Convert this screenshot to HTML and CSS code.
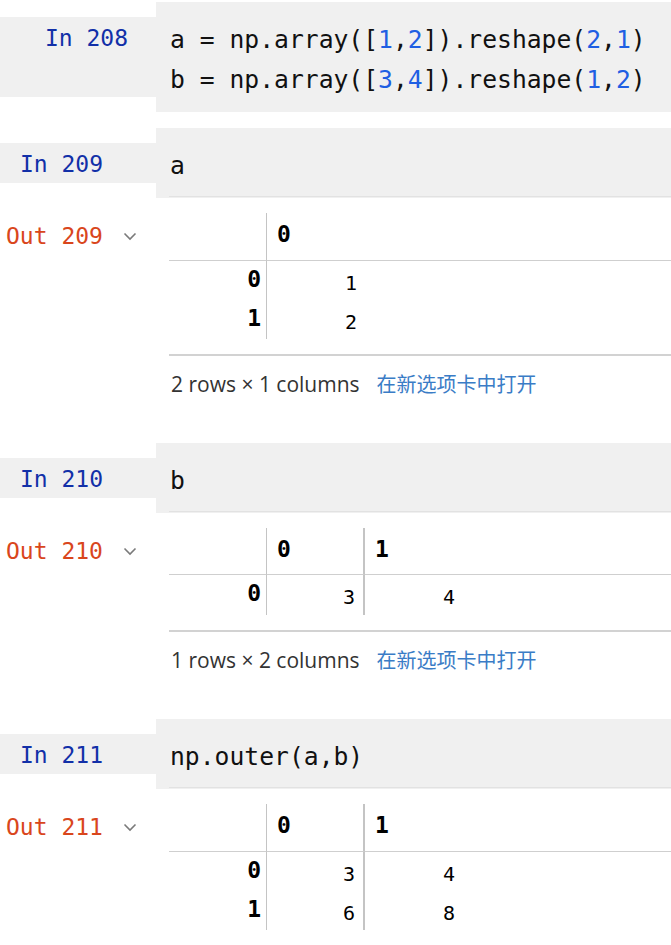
FILE: index.html
```html
<!DOCTYPE html>
<html>
<head>
<meta charset="utf-8">
<link rel="stylesheet" href="styles.css">
</head>
<body>
<div class="nb">
  <div class="cell cell-first">
    <div class="prompt in wide">In 208</div>
    <div class="code"><div class="editor noline">
      <div class="line">a = np.array([<span class="n">1</span>,<span class="n">2</span>]).reshape(<span class="n">2</span>,<span class="n">1</span>)</div>
      <div class="line">b = np.array([<span class="n">3</span>,<span class="n">4</span>]).reshape(<span class="n">1</span>,<span class="n">2</span>)</div>
    </div></div>
  </div>

  <div class="cell">
    <div class="prompt in">In 209</div>
    <div class="code"><div class="editor"><div class="line">a</div></div></div>
  </div>
  <div class="output">
    <div class="oprompt"><span class="out">Out 209</span><svg class="chev" width="14" height="9" viewBox="0 0 14 9"><path d="M1.5 1.5 L7 7 L12.5 1.5" fill="none" stroke="#7a7a7a" stroke-width="1.6"/></svg></div>
    <div class="oarea">
      <div class="tbl cols1">
        <div class="th idx"></div><div class="th c1">0</div><div class="th fill"></div>
        <div class="ix">0</div><div class="td c1">1</div><div class="td fill"></div>
        <div class="ix">1</div><div class="td c1">2</div><div class="td fill"></div>
      </div>
      <div class="foot"><span>2 rows × 1 columns</span><a class="lnk">在新选项卡中打开</a></div>
    </div>
  </div>

  <div class="cell after-out">
    <div class="prompt in">In 210</div>
    <div class="code"><div class="editor"><div class="line">b</div></div></div>
  </div>
  <div class="output">
    <div class="oprompt"><span class="out">Out 210</span><svg class="chev" width="14" height="9" viewBox="0 0 14 9"><path d="M1.5 1.5 L7 7 L12.5 1.5" fill="none" stroke="#7a7a7a" stroke-width="1.6"/></svg></div>
    <div class="oarea">
      <div class="tbl cols2 one">
        <div class="th idx"></div><div class="th c1">0</div><div class="th c2">1</div><div class="th fill"></div>
        <div class="ix">0</div><div class="td c1">3</div><div class="td c2">4</div><div class="td fill"></div>
      </div>
      <div class="foot"><span>1 rows × 2 columns</span><a class="lnk">在新选项卡中打开</a></div>
    </div>
  </div>

  <div class="cell after-out">
    <div class="prompt in">In 211</div>
    <div class="code"><div class="editor"><div class="line">np.outer(a,b)</div></div></div>
  </div>
  <div class="output">
    <div class="oprompt"><span class="out">Out 211</span><svg class="chev" width="14" height="9" viewBox="0 0 14 9"><path d="M1.5 1.5 L7 7 L12.5 1.5" fill="none" stroke="#7a7a7a" stroke-width="1.6"/></svg></div>
    <div class="oarea">
      <div class="tbl cols2">
        <div class="th idx"></div><div class="th c1">0</div><div class="th c2">1</div><div class="th fill"></div>
        <div class="ix">0</div><div class="td c1">3</div><div class="td c2">4</div><div class="td fill"></div>
        <div class="ix">1</div><div class="td c1">6</div><div class="td c2">8</div><div class="td fill"></div>
      </div>
    </div>
  </div>
</div>
</body>
</html>
```
FILE: styles.css
```css
html, body {
  margin: 0;
  padding: 0;
  background: #ffffff;
}
.nb {
  width: 671px;
  padding-top: 2px;
  font-family: "DejaVu Sans Mono", "Liberation Mono", monospace;
}
.cell {
  display: flex;
  align-items: stretch;
}
.cell + .cell {
  margin-top: 16px;
}
.cell.after-out {
  margin-top: 45px;
}
.prompt {
  width: 156px;
  flex: 0 0 156px;
  box-sizing: border-box;
  margin: 15px 0;
  background: #f0f0f0;
  text-align: right;
  padding-right: 53px;
  padding-top: 3px;
  font-size: 23px;
  line-height: 37px;
}
.prompt.wide {
  padding-right: 28px;
}
.in {
  color: #1230a8;
}
.code {
  flex: 1;
  background: #f0f0f0;
  padding-top: 18px;
  padding-bottom: 1px;
}
.editor {
  margin-left: 13px;
  padding-left: 1px;
  padding-bottom: 10px;
  border-bottom: 1px solid #e2e2e2;
}
.editor.noline {
  border-bottom-color: transparent;
}
.line {
  font-size: 24.7px;
  line-height: 40px;
  color: #111;
  white-space: pre;
}
.n {
  color: #1f5fe3;
}
.output {
  display: flex;
  margin-top: 15px;
}
.oprompt {
  width: 169px;
  flex: 0 0 169px;
  box-sizing: border-box;
  padding-left: 6px;
  display: flex;
  align-items: flex-start;
}
.out {
  color: #d9461c;
  font-size: 23px;
  line-height: 46px;
}
.chev {
  margin-left: 20px;
  margin-top: 19px;
}
.oarea {
  flex: 1;
}
.tbl {
  display: grid;
}
.tbl.cols1 {
  grid-template-columns: 98px 98px 1fr;
}
.tbl.cols2 {
  grid-template-columns: 98px 98px 98px 1fr;
}
.th {
  height: 48px;
  box-sizing: border-box;
  border-bottom: 1px solid #cfcfcf;
  font-weight: bold;
  font-size: 23px;
  line-height: 42px;
  padding-left: 10px;
  color: #000;
}
.tbl.one .th {
  height: 47px;
}
.idx {
  border-right: 1px solid #c4c4c4;
}
.cols2 .c1 {
  border-right: 2px solid #c4c4c4;
}
.ix {
  height: 39px;
  box-sizing: border-box;
  text-align: right;
  padding-right: 5px;
  border-right: 1px solid #c4c4c4;
  font-weight: bold;
  font-size: 23px;
  line-height: 36px;
  color: #000;
}
.td {
  height: 39px;
  box-sizing: border-box;
  text-align: right;
  padding-right: 8px;
  padding-top: 6px;
  font-size: 20px;
  line-height: 33px;
  color: #000;
}
.tbl.one .ix, .tbl.one .td {
  height: 40px;
}
.foot {
  margin-top: 15px;
  border-top: 2px solid #d2d2d2;
  padding-top: 14px;
  padding-left: 2px;
  font-family: "Open Sans", "Noto Sans CJK SC", sans-serif;
  font-size: 21px;
  line-height: 28px;
  color: #333;
  display: flex;
  gap: 17px;
  height: 28px;
}
.lnk {
  color: #3a7cc6;
  font-family: "Noto Sans CJK SC", sans-serif;
  font-size: 20px;
}
```
